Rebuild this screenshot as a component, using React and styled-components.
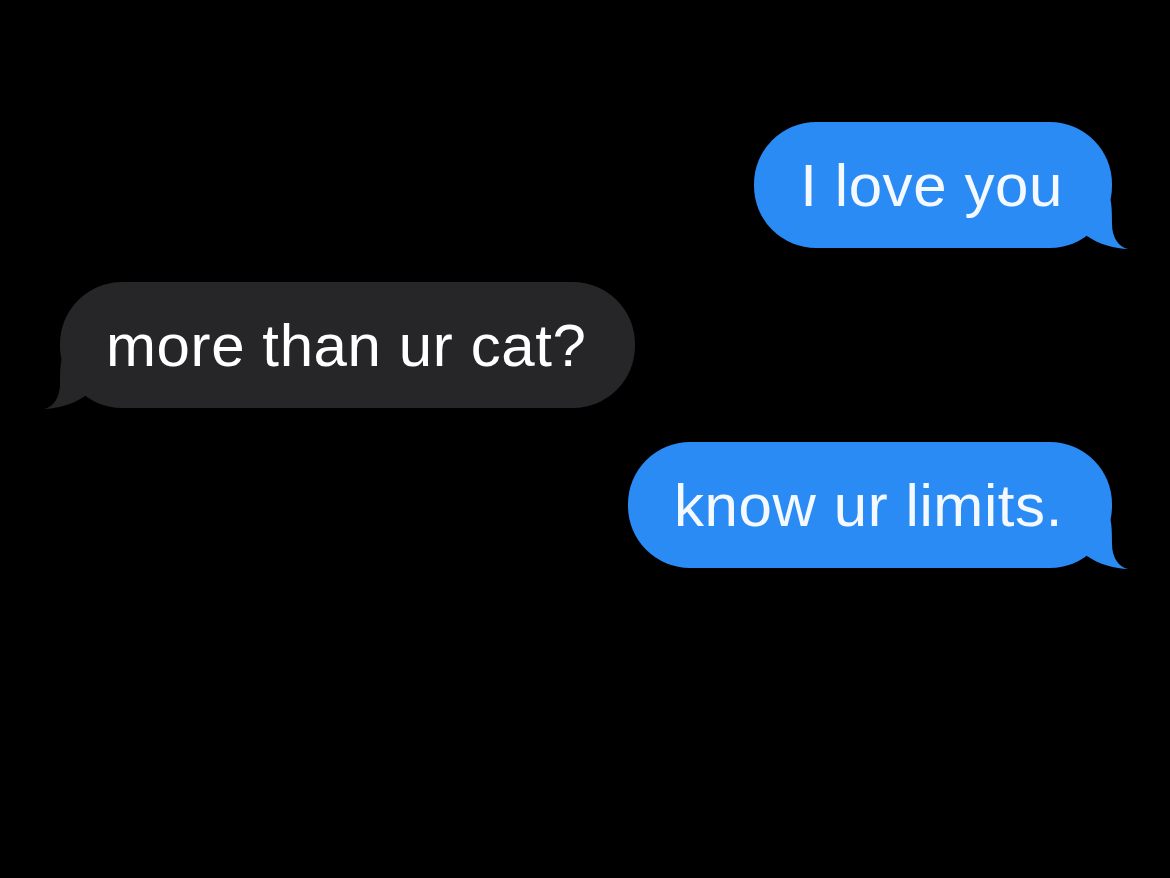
import React from 'react';
import styled, { createGlobalStyle } from 'styled-components';

const GlobalStyle = createGlobalStyle`
  html, body {
    margin: 0;
    padding: 0;
    background: #000;
  }
`;

const Screen = styled.div`
  width: 1170px;
  height: 878px;
  background: #000;
  box-sizing: border-box;
  padding: 122px 58px 0 60px;
  display: flex;
  flex-direction: column;
  gap: 34px;
  font-family: 'Liberation Sans', Arial, sans-serif;
`;

const Row = styled.div`
  display: flex;
  justify-content: ${(p) => (p.$mine ? 'flex-end' : 'flex-start')};
`;

const Bubble = styled.div`
  position: relative;
  height: 126px;
  display: flex;
  align-items: center;
  padding: 0 49px 0 46px;
  border-radius: 62px;
  background: ${(p) => (p.$mine ? '#2b8bf4' : '#262628')};
  color: ${(p) => (p.$mine ? '#f4f9ff' : '#ffffff')};
  font-size: 60px;
  letter-spacing: 0.6px;
  white-space: nowrap;
`;

const Tail = styled.svg`
  position: absolute;
  bottom: -2px;
  ${(p) => (p.$mine ? 'right: -18px;' : 'left: -18px; transform: scaleX(-1);')}
`;

// bubble tail, drawn for the right side and mirrored for the left
const BubbleTail = ({ mine }) => (
  <Tail $mine={mine} width="52" height="52" viewBox="0 0 52 52">
    <path
      d="M9 0 L32 0 C33.5 5 34 12 34 26 C34 40 41 49 50 51 C38 51 20 46 9 38 Z"
      fill={mine ? '#2b8bf4' : '#262628'}
    />
  </Tail>
);

const Message = ({ mine, children }) => (
  <Row $mine={mine}>
    <Bubble $mine={mine}>
      {children}
      <BubbleTail mine={mine} />
    </Bubble>
  </Row>
);

export default function App() {
  return (
    <>
      <GlobalStyle />
      <Screen>
        <Message mine>I love you</Message>
        <Message>more than ur cat?</Message>
        <Message mine>know ur limits.</Message>
      </Screen>
    </>
  );
}
